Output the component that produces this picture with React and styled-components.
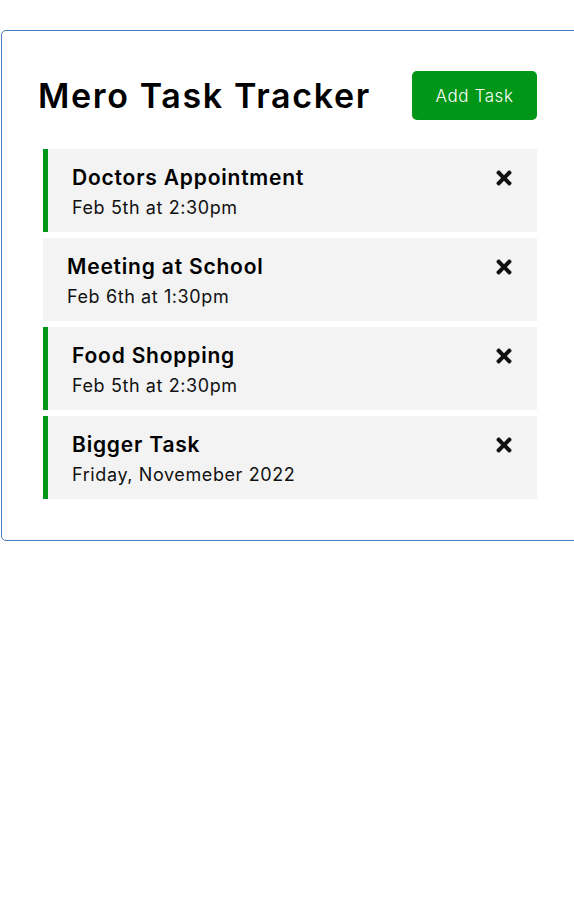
import React from 'react'
import styled, { createGlobalStyle } from 'styled-components'
import { FaTimes } from 'react-icons/fa'

const GlobalStyle = createGlobalStyle`
* {
  box-sizing: border-box;
  margin: 0;
  padding: 0;
}
html, body {
  overflow-x: hidden;
}
body {
  font-family: Inter, "Noto Sans", sans-serif;
  background: #fff;
  color: #000;
}
`;

const Container = styled.div`
width: 578px;
margin: 30px 0 0 1px;
padding: 35px 36px 41px;
border: 1px solid #4a7fc1;
border-radius: 5px;
`;

const Header = styled.header`
display: flex;
justify-content: space-between;
align-items: center;
margin-bottom: 24px;
`;

const Title = styled.h1`
font-size: 34px;
font-weight: 600;
letter-spacing: 1.65px;
`;

const Button = styled.button`
margin: 5px;
width: 125px;
height: 49px;
border: none;
border-radius: 5px;
background-color: #009617;
color: #fff;
font-family: inherit;
font-size: 17px;
font-weight: 300;
letter-spacing: 0.6px;
cursor: pointer;
`;

const TaskList = styled.div`
display: flex;
flex-direction: column;
gap: 6px;
`;

const Task = styled.div`
margin: 0 5px;
padding: 11px 20px 13px 24px;
background: #f3f3f3;
border-left: ${p => (p.$reminder ? '5px solid #009617' : 'none')};
cursor: pointer;
`;

const TaskTitle = styled.h3`
display: flex;
justify-content: space-between;
align-items: center;
font-size: 21px;
font-weight: 600;
letter-spacing: 0.8px;
line-height: 36px;
`;

const Delete = styled(FaTimes)`
font-size: 22px;
color: #111;
margin-right: 2px;
`;

const TaskDate = styled.p`
font-size: 18px;
font-weight: 400;
letter-spacing: 0.6px;
line-height: 23px;
color: #111;
`;

const tasks = [
  { id: 1, text: 'Doctors Appointment', day: 'Feb 5th at 2:30pm', reminder: true },
  { id: 2, text: 'Meeting at School', day: 'Feb 6th at 1:30pm', reminder: false },
  { id: 3, text: 'Food Shopping', day: 'Feb 5th at 2:30pm', reminder: true },
  { id: 4, text: 'Bigger Task', day: 'Friday, Novemeber 2022', reminder: true },
]

export default function App() {
  return (
    <>
      <GlobalStyle />
      <Container>
        <Header>
          <Title>Mero Task Tracker</Title>
          <Button>Add Task</Button>
        </Header>
        <TaskList>
          {tasks.map(task => (
            <Task key={task.id} $reminder={task.reminder}>
              <TaskTitle>
                {task.text}
                <Delete />
              </TaskTitle>
              <TaskDate>{task.day}</TaskDate>
            </Task>
          ))}
        </TaskList>
      </Container>
    </>
  )
}
